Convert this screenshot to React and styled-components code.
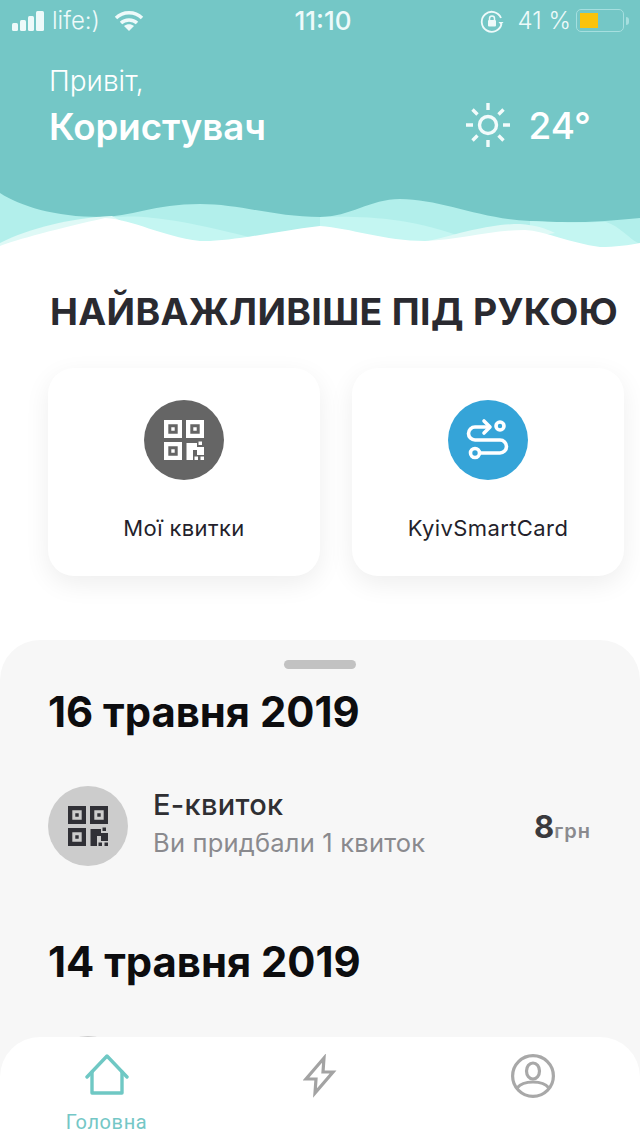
import React from "react";
import styled, { createGlobalStyle } from "styled-components";

const Global = createGlobalStyle`
  html, body { margin: 0; padding: 0; background: #fff; }
  * { box-sizing: border-box; }
`;

const Phone = styled.div`
  position: relative;
  width: 640px;
  height: 1136px;
  overflow: hidden;
  background: #fff;
  font-family: Inter, "Liberation Sans", sans-serif;
`;

const Header = styled.header`
  position: relative;
  height: 248px;
  color: #fff;
  background: #74c7c6;
`;

const WaveArt = styled.svg`
  position: absolute;
  left: 0;
  top: 190px;
  display: block;
`;

const StatusBar = styled.div`
  position: relative;
  display: grid;
  grid-template-columns: 1fr auto 1fr;
  align-items: center;
  height: 41px;
  padding: 0 11px 0 12px;
  font-size: 24px;
  color: #eefafa;
`;

const StatusLeft = styled.div`
  display: flex;
  align-items: center;
  gap: 6px;
`;

const Carrier = styled.span`
  font-weight: 300;
  margin-right: 8px;
`;

const Clock = styled.span`
  margin-left: 5px;
  font-weight: 500;
  font-size: 26px;
`;

const StatusRight = styled.div`
  display: flex;
  align-items: center;
  justify-content: flex-end;
  font-weight: 300;
`;

const Percent = styled.span`
  margin: 0 5px 0 14px;
  white-space: nowrap;
`;

const Battery = styled.div`
  width: 48px;
  height: 23px;
  padding: 3px;
  border: 1.5px solid #a6dfdf;
  border-radius: 5px;
`;

const BatteryFill = styled.div`
  width: 18px;
  height: 100%;
  background: #fbc30b;
`;

const BatteryCap = styled.div`
  width: 3px;
  height: 8px;
  margin-left: 2px;
  background: #a6dfdf;
  border-radius: 0 3px 3px 0;
`;

const Greeting = styled.div`
  position: relative;
  display: flex;
  justify-content: space-between;
  align-items: flex-end;
  padding: 24px 49px 0 49px;
`;

const Hello = styled.div`
  font-size: 28px;
  line-height: 32px;
  font-weight: 300;
`;

const UserName = styled.div`
  margin-top: 8px;
  font-size: 36.6px;
  line-height: 44px;
  font-weight: 600;
`;

const Weather = styled.div`
  display: flex;
  align-items: center;
  gap: 18px;
  height: 46px;
  margin-bottom: 1px;
  font-size: 37px;
  font-weight: 500;
`;

const Main = styled.main`
  padding: 0 16px 0 48px;
`;

const Headline = styled.h1`
  margin: 42px 0 0 2px;
  font-size: 37.4px;
  line-height: 44px;
  font-weight: 700;
  letter-spacing: 0.35px;
  white-space: nowrap;
  color: #2a2a30;
`;

const Cards = styled.div`
  display: grid;
  grid-template-columns: 272px 272px;
  gap: 32px;
  margin-top: 34px;
`;

const Card = styled.div`
  display: flex;
  flex-direction: column;
  align-items: center;
  height: 208px;
  padding-top: 32px;
  background: #fff;
  border-radius: 26px;
  box-shadow: 0 8px 26px rgba(0, 0, 0, 0.07);
`;

const Round = styled.div`
  display: flex;
  align-items: center;
  justify-content: center;
  width: 80px;
  height: 80px;
  flex: none;
  border-radius: 50%;
  background: ${(p) => p.$bg};
`;

const CardLabel = styled.div`
  margin-top: 35px;
  font-size: 22px;
  line-height: 26px;
  font-weight: 400;
  letter-spacing: 0.4px;
  color: #241f2b;
`;

const Sheet = styled.section`
  height: 496px;
  margin-top: 64px;
  padding: 20px 0 0 48px;
  background: #f7f7f7;
  border-radius: 40px 40px 0 0;
`;

const Handle = styled.div`
  width: 72px;
  height: 9px;
  margin: 0 auto;
  transform: translateX(-24px);
  background: #c2c2c2;
  border-radius: 5px;
`;

const DateTitle = styled.h2`
  margin: ${(p) => p.$top}px 0 0;
  font-size: 41.8px;
  line-height: 48px;
  font-weight: 700;
  color: #0d0d0f;
`;

const Row = styled.div`
  display: flex;
  align-items: center;
  margin-top: 50px;
  padding-right: 49px;
`;

const RowText = styled.div`
  flex: 1;
  margin-left: 25px;
  padding-bottom: 6px;
`;

const RowTitle = styled.div`
  font-size: 29px;
  line-height: 34px;
  font-weight: 500;
  letter-spacing: 0.3px;
  color: #2f2f33;
`;

const RowSub = styled.div`
  margin-top: 6px;
  font-size: 25.5px;
  line-height: 30px;
  letter-spacing: 0.2px;
  color: #8a8a8e;
`;

const Price = styled.div`
  display: flex;
  align-items: baseline;
  font-size: 31px;
  font-weight: 700;
  color: #3a3a3e;
`;

const Currency = styled.span`
  font-size: 20px;
  font-weight: 600;
  letter-spacing: 1px;
  color: #8a8a8e;
`;

const Peek = styled.div`
  width: 80px;
  height: 80px;
  margin-top: 50px;
  border-radius: 50%;
  background: #cccccc;
`;

const TabBar = styled.nav`
  position: absolute;
  left: 0;
  right: 0;
  bottom: 0;
  height: 99px;
  display: grid;
  grid-template-columns: 213px 213px 214px;
  background: #fff;
  border-radius: 40px 40px 0 0;
`;

const Tab = styled.div`
  display: flex;
  flex-direction: column;
  align-items: center;
  padding-top: 17px;
`;

const TabLabel = styled.div`
  margin-top: 15px;
  font-family: Roboto, "Liberation Sans", sans-serif;
  font-size: 20px;
  line-height: 22px;
  letter-spacing: 0.6px;
  color: #74c7c6;
`;

const QrIcon = ({ size, color }) => (
  <svg width={size} height={size} viewBox="0 0 40 40" fill={color}>
    <path fillRule="evenodd" d="M0 0h18v18H0zM4.300 4.300v9.400h9.400V4.300zM22 0h18v18H22zM26.300 4.300v9.400h9.400V4.300zM0 22h18v18H0zM4.300 26.300v9.400h9.400V26.300z" />
    <path d="M7.300 7.300h3.400v3.400H7.300zM29.300 7.300h3.400v3.400h-3.400zM7.300 29.300h3.400v3.400H7.300z" />
    <path d="M22.500 23H33v4h7v8H33V30H29V40H22.500zM34.500 21.500h3.500V25h-3.500zM30.500 36.500H34V40h-3.500zM36.500 36.500H40V40h-3.500z" />
  </svg>
);

const Waves = () => (
  <WaveArt width="640" height="60" viewBox="0 190 640 60">
    <path fill="#b2efeb" d="M0 193C20 206 55 217 100 217C130 217 155 204 200 204C240 204 275 217 320 217C350 217 370 199 400 199C440 199 480 219 530 221C570 224 610 221 640 218V250H0Z" />
    <path fill="#c4f6f2" d="M112 217C150 214 190 222 262 240L180 246L130 224Z" />
    <path fill="#c4f6f2" d="M320 217C370 216 410 218 465 238L400 246L320 232Z" />
    <path fill="#c4f6f2" d="M530 221C570 223 590 222 606 222C620 226 630 240 640 244L600 250L530 236Z" />
    <path fill="#dff9f6" d="M0 243C30 228 70 218 112 216L130 226L0 250Z" />
    <path fill="#dff9f6" d="M425 242C465 232 490 224 520 224C535 225 545 228 555 233L500 242Z" />
    <path fill="#ffffff" d="M0 246C15 240 60 228 105 218C135 220 160 236 200 241C230 242 270 232 320 226C350 228 385 241 425 241C460 240 490 230 525 230C545 231 570 243 600 247C615 247 630 245 640 243V250H0Z" />
  </WaveArt>
);

export default function App() {
  return (
    <Phone>
      <Global />
      <Header>
        <Waves />
        <StatusBar>
          <StatusLeft>
            <svg width="34" height="20" viewBox="0 0 34 20" fill="#eefafa">
              <rect x="0" y="12" width="6" height="8" rx="1.500" />
              <rect x="8" y="9" width="6" height="11" rx="1.500" />
              <rect x="16" y="5" width="6" height="15" rx="1.500" />
              <rect x="24" y="0" width="8" height="20" rx="1.500" />
            </svg>
            <Carrier>life:)</Carrier>
            <svg width="30" height="22" viewBox="0 0 30 22" fill="none" stroke="#eefafa" strokeWidth="3.400">
              <path d="M2 8C9 1 21 1 28 8" />
              <path d="M7 13C11 9 19 9 23 13" />
              <path d="M15 21L10 16C13 13.500 17 13.500 20 16Z" fill="#eefafa" stroke="none" />
            </svg>
          </StatusLeft>
          <Clock>11:10</Clock>
          <StatusRight>
            <svg width="24" height="24" viewBox="0 0 24 24" fill="none" stroke="#eefafa" strokeWidth="1.800">
              <path d="M21 9A10 10 0 1 0 21.500 15" />
              <path d="M18.500 13H23.500L21 16Z" fill="#eefafa" stroke="none" />
              <rect x="8" y="11" width="8" height="6.500" rx="1" fill="#eefafa" stroke="none" />
              <path d="M9.500 11V9.500a2.500 2.500 0 0 1 5 0V11" strokeWidth="1.500" />
            </svg>
            <Percent>41 %</Percent>
            <Battery><BatteryFill /></Battery>
            <BatteryCap />
          </StatusRight>
        </StatusBar>
        <Greeting>
          <div>
            <Hello>Привіт,</Hello>
            <UserName>Користувач</UserName>
          </div>
          <Weather>
            <svg width="46" height="46" viewBox="0 0 46 46" fill="none" stroke="#f2fbfb" strokeWidth="3.400">
              <circle cx="23" cy="23" r="8.500" />
              <path d="M23 1V8M23 38V45M1 23H8M38 23H45M7.500 7.500L12.500 12.500M33.500 33.500L38.500 38.500M7.500 38.500L12.500 33.500M33.500 12.500L38.500 7.500" />
            </svg>
            <span>24°</span>
          </Weather>
        </Greeting>
      </Header>
      <Main>
        <Headline>НАЙВАЖЛИВІШЕ ПІД РУКОЮ</Headline>
        <Cards>
          <Card>
            <Round $bg="#656565"><QrIcon size={40} color="#ffffff" /></Round>
            <CardLabel>Мої квитки</CardLabel>
          </Card>
          <Card>
            <Round $bg="#35a4d8">
              <svg width="44" height="44" viewBox="0 0 44 44" fill="none" stroke="#ffffff" strokeWidth="3.600" strokeLinecap="round" strokeLinejoin="round">
                <path d="M22 9H9A6.500 6.500 0 0 0 9 22H34A6.500 6.500 0 0 1 34 35H14" />
                <path d="M18 3L24 9L18 15" />
                <circle cx="34" cy="8" r="4" />
                <circle cx="9" cy="35" r="4.500" />
              </svg>
            </Round>
            <CardLabel>KyivSmartCard</CardLabel>
          </Card>
        </Cards>
      </Main>
      <Sheet>
        <Handle />
        <DateTitle $top={19}>16 травня 2019</DateTitle>
        <Row>
          <Round $bg="#cccccc"><QrIcon size={40} color="#303036" /></Round>
          <RowText>
            <RowTitle>Е-квиток</RowTitle>
            <RowSub>Ви придбали 1 квиток</RowSub>
          </RowText>
          <Price>8<Currency>грн</Currency></Price>
        </Row>
        <DateTitle $top={72}>14 травня 2019</DateTitle>
        <Peek />
      </Sheet>
      <TabBar>
        <Tab>
          <svg width="44" height="42" viewBox="0 0 44 42" fill="none" stroke="#6fc8c4" strokeWidth="3.400" strokeLinejoin="round" strokeLinecap="round">
            <path d="M2 23L22 2L42 23" />
            <path d="M7 18V39H37V18" />
          </svg>
          <TabLabel>Головна</TabLabel>
        </Tab>
        <Tab>
          <svg width="34" height="44" viewBox="0 0 34 44" fill="none" stroke="#a3a3a3" strokeWidth="3.200" strokeLinejoin="miter">
            <path d="M21 4L3 25H13L12 39L30 18H20Z" />
          </svg>
        </Tab>
        <Tab>
          <svg width="44" height="44" viewBox="0 0 44 44" fill="none" stroke="#a8a8a8" strokeWidth="3.200">
            <circle cx="22" cy="22" r="20.400" />
            <ellipse cx="22" cy="17" rx="6.500" ry="8" />
            <path d="M6 34C10 29 16 28 22 28C28 28 34 29 38 34" />
          </svg>
        </Tab>
      </TabBar>
    </Phone>
  );
}
